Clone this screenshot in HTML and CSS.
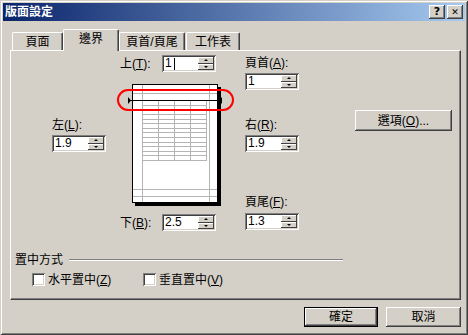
FILE: index.html
```html
<!DOCTYPE html>
<html lang="zh-Hant">
<head>
    <meta charset="UTF-8">
    <meta name="viewport" content="width=device-width, initial-scale=1.0">
    <title>版面設定</title>
    <link rel="stylesheet" href="styles.css">
</head>
<body>

    <div class="window">
        <!-- 標題列 -->
        <div class="titlebar">
            <span class="title">版面設定</span>
            <div class="title-btns">
                <span class="tbtn">?</span>
                <span class="tbtn close">✕</span>
            </div>
        </div>

        <div class="dialog">
            <!-- 索引標籤 -->
            <div class="tabs">
                <div class="tab t1">頁面</div>
                <div class="tab t2 active">邊界</div>
                <div class="tab t3">頁首/頁尾</div>
                <div class="tab t4">工作表</div>
            </div>

            <div class="panel">
                <div class="margins">
                    <div class="col-left">
                        <div class="label">左(<u>L</u>):</div>
                        <div class="spin"><span class="val">1.9</span><span class="arrows"><span class="up"></span><span class="dn"></span></span></div>
                    </div>

                    <div class="col-center">
                        <div class="row top-row">
                            <span class="row-label">上(<u>T</u>):</span>
                            <div class="spin"><span class="val">1<span class="caret"></span></span><span class="arrows"><span class="up"></span><span class="dn"></span></span></div>
                        </div>

                        <!-- 預覽 -->
                        <svg class="preview" width="118" height="122" viewBox="0 0 118 122">
                            <rect x="18" y="3" width="86" height="119" fill="#000"/>
                            <rect x="15.5" y="0.5" width="85" height="118" fill="#fff" stroke="#000"/>
                            <g stroke="#b4b4b4" stroke-width="1">
                                <line x1="25.5" y1="1" x2="25.5" y2="118"/>
                                <line x1="92.5" y1="1" x2="92.5" y2="118"/>
                                <line x1="16" y1="9.5" x2="100" y2="9.5"/>
                                <line x1="16" y1="105.5" x2="100" y2="105.5"/>
                                <line x1="16" y1="112.5" x2="100" y2="112.5"/>
                                <line x1="41.5" y1="16" x2="41.5" y2="76"/>
                                <line x1="57.5" y1="16" x2="57.5" y2="76"/>
                                <line x1="73.5" y1="16" x2="73.5" y2="76"/>
                                <line x1="89.5" y1="16" x2="89.5" y2="76"/>
                                <line x1="25" y1="21.5" x2="90" y2="21.5"/>
                                <line x1="25" y1="26.5" x2="90" y2="26.5"/>
                                <line x1="25" y1="30.5" x2="90" y2="30.5"/>
                                <line x1="25" y1="35.5" x2="90" y2="35.5"/>
                                <line x1="25" y1="39.5" x2="90" y2="39.5"/>
                                <line x1="25" y1="44.5" x2="90" y2="44.5"/>
                                <line x1="25" y1="48.5" x2="90" y2="48.5"/>
                                <line x1="25" y1="53.5" x2="90" y2="53.5"/>
                                <line x1="25" y1="58.5" x2="90" y2="58.5"/>
                                <line x1="25" y1="62.5" x2="90" y2="62.5"/>
                                <line x1="25" y1="67.5" x2="90" y2="67.5"/>
                                <line x1="25" y1="71.5" x2="90" y2="71.5"/>
                                <line x1="25" y1="76.5" x2="90" y2="76.5"/>
                            </g>
                            <line x1="11" y1="16.5" x2="105" y2="16.5" stroke="#000"/>
                            <polygon points="11,13 14,16.5 11,20" fill="#000"/>
                            <polygon points="105,13 102,16.5 105,20" fill="#000"/>
                            <rect x="1" y="6" width="115" height="20" rx="10" fill="none" stroke="#ff0000" stroke-width="2"/>
                        </svg>

                        <div class="row bottom-row">
                            <span class="row-label">下(<u>B</u>):</span>
                            <div class="spin"><span class="val">2.5</span><span class="arrows"><span class="up"></span><span class="dn"></span></span></div>
                        </div>
                    </div>

                    <div class="col-right">
                        <div class="label header-label">頁首(<u>A</u>):</div>
                        <div class="spin"><span class="val">1</span><span class="arrows"><span class="up"></span><span class="dn"></span></span></div>

                        <div class="label right-label">右(<u>R</u>):</div>
                        <div class="spin"><span class="val">1.9</span><span class="arrows"><span class="up"></span><span class="dn"></span></span></div>

                        <div class="label footer-label">頁尾(<u>F</u>):</div>
                        <div class="spin"><span class="val">1.3</span><span class="arrows"><span class="up"></span><span class="dn"></span></span></div>
                    </div>

                    <div class="col-opt">
                        <div class="btn options-btn">選項(<u>O</u>)...</div>
                    </div>
                </div>

                <!-- 置中方式 -->
                <div class="center-group">
                    <div class="group-title">
                        <span>置中方式</span>
                        <span class="group-line"></span>
                    </div>
                    <div class="checks">
                        <div class="check first"><span class="box"></span>水平置中(<u>Z</u>)</div>
                        <div class="check"><span class="box"></span>垂直置中(<u>V</u>)</div>
                    </div>
                </div>
            </div>

            <div class="footer">
                <div class="btn default">確定</div>
                <div class="btn cancel">取消</div>
            </div>
        </div>
    </div>

</body>
</html>
```

FILE: styles.css
```css
body {
    margin: 0;
    padding: 0;
    background-color: #d4d0c8;
    font-family: "Liberation Sans", "Noto Sans CJK TC", sans-serif;
    font-size: 12px;
    color: #000;
}

.window {
    width: 468px;
    height: 335px;
    box-sizing: border-box;
    padding: 3px;
    overflow: hidden;
    background-color: #d4d0c8;
    box-shadow: inset 1px 1px #d4d0c8, inset -1px -1px #404040,
                inset 2px 2px #ffffff, inset -2px -2px #808080;
}

/* 標題列 */
.titlebar {
    height: 18px;
    display: flex;
    align-items: center;
    justify-content: space-between;
    padding-left: 2px;
    background: linear-gradient(to right, #0a246a, #a6caf0);
}

.title {
    color: #fff;
    font-weight: bold;
    line-height: 14px;
}

.title-btns {
    display: flex;
    gap: 2px;
    margin-right: 2px;
}

.tbtn {
    width: 16px;
    height: 14px;
    box-sizing: border-box;
    display: flex;
    align-items: center;
    justify-content: center;
    font-family: "DejaVu Sans", sans-serif;
    font-size: 11px;
    font-weight: bold;
    line-height: 14px;
    background-color: #d4d0c8;
    box-shadow: inset -1px -1px #404040, inset 1px 1px #ffffff,
                inset -2px -2px #808080, inset 2px 2px #d4d0c8;
}

.tbtn.close {
    font-size: 9px;
}

.dialog {
    padding: 0 4px 0 7px;
}

/* 索引標籤 */
.tabs {
    display: flex;
    align-items: flex-end;
    height: 21px;
    margin-top: 8px;
    padding-left: 2px;
}

.tab {
    height: 18px;
    box-sizing: border-box;
    display: flex;
    align-items: center;
    justify-content: center;
    line-height: 14px;
    border-top: 1px solid #fff;
    border-left: 1px solid #fff;
    border-right: 1px solid #404040;
    border-radius: 2px 2px 0 0;
    box-shadow: inset -1px 0 #808080;
}

.t1 { width: 51px; }
.t2 { width: 56px; }
.t3 { width: 66px; }
.t4 { width: 54px; margin-left: 1px; }

.tab.active {
    height: 22px;
    margin-bottom: -1px;
    padding-bottom: 3px;
    position: relative;
    background-color: #d4d0c8;
}

.panel {
    width: 451px;
    height: 250px;
    box-sizing: border-box;
    border-top: 1px solid #fff;
    border-left: 1px solid #fff;
    border-right: 1px solid #404040;
    border-bottom: 1px solid #404040;
    box-shadow: inset -1px -1px #808080;
}

.margins {
    display: flex;
    height: 181px;
    padding-left: 41px;
}

.label {
    line-height: 14px;
    white-space: nowrap;
}

.col-left {
    width: 54px;
    padding-top: 67px;
}

.col-left .spin {
    margin-top: 3px;
}

.col-center {
    width: 114px;
    margin-left: 14px;
}

.row {
    display: flex;
    align-items: center;
    height: 17px;
}

.row-label {
    width: 42px;
    line-height: 14px;
    white-space: nowrap;
}

.top-row {
    margin-top: 4px;
}

.preview {
    display: block;
    margin: 12px 0 0 -3px;
}

.bottom-row {
    margin-top: 8px;
}

.col-right {
    width: 56px;
    margin-left: 11px;
}

.header-label {
    margin-top: 5px;
}

.col-right .spin {
    margin-top: 3px;
}

.right-label {
    margin-top: 28px;
}

.footer-label {
    margin-top: 43px;
}

.col-right .footer-label + .spin {
    margin-top: 4px;
}

.col-opt {
    width: 97px;
    margin-left: 54px;
}

/* 微調方塊 */
.spin {
    width: 54px;
    height: 17px;
    box-sizing: border-box;
    display: flex;
    padding: 2px;
    background-color: #fff;
    box-shadow: inset 1px 1px #808080, inset -1px -1px #ffffff,
                inset 2px 2px #404040, inset -2px -2px #d4d0c8;
}

.val {
    flex: 1;
    display: flex;
    align-items: center;
    padding-left: 1px;
    line-height: 13px;
}

.caret {
    display: inline-block;
    width: 1px;
    height: 12px;
    margin-left: 2px;
    background-color: #000;
}

.arrows {
    width: 16px;
    display: flex;
    flex-direction: column;
}

.up, .dn {
    flex: 1;
    display: flex;
    align-items: center;
    justify-content: center;
    background-color: #d4d0c8;
    box-shadow: inset -1px -1px #404040, inset 1px 1px #ffffff;
}

.up::after, .dn::after {
    content: "";
    width: 0;
    height: 0;
    border-left: 2px solid transparent;
    border-right: 2px solid transparent;
}

.up::after {
    border-bottom: 2px solid #000;
}

.dn::after {
    border-top: 2px solid #000;
}

/* 按鈕 */
.btn {
    height: 21px;
    box-sizing: border-box;
    display: flex;
    align-items: center;
    justify-content: center;
    line-height: 14px;
    background-color: #d4d0c8;
    box-shadow: inset -1px -1px #404040, inset 1px 1px #ffffff,
                inset -2px -2px #808080, inset 2px 2px #d4d0c8;
}

.options-btn {
    width: 97px;
    margin-top: 59px;
}

/* 置中方式 */
.center-group {
    margin-top: 21px;
}

.group-title {
    display: flex;
    align-items: center;
    padding-left: 4px;
    line-height: 14px;
}

.group-line {
    width: 274px;
    margin-left: 6px;
    border-top: 1px solid #808080;
    border-bottom: 1px solid #fff;
}

.checks {
    display: flex;
    margin-top: 6px;
    padding-left: 21px;
}

.check {
    display: flex;
    align-items: center;
    height: 13px;
    line-height: 14px;
    white-space: nowrap;
}

.check.first {
    width: 111px;
}

.box {
    width: 13px;
    height: 13px;
    box-sizing: border-box;
    margin-right: 3px;
    background-color: #fff;
    box-shadow: inset 1px 1px #808080, inset -1px -1px #ffffff,
                inset 2px 2px #404040, inset -2px -2px #d4d0c8;
}

.footer {
    display: flex;
    justify-content: flex-end;
    gap: 8px;
    margin-top: 7px;
}

.footer .btn {
    height: 20px;
}

.btn.default {
    width: 74px;
    box-shadow: inset 0 0 0 1px #000, inset -2px -2px #404040, inset 2px 2px #ffffff,
                inset -3px -3px #808080;
}

.btn.cancel {
    width: 75px;
}
```
